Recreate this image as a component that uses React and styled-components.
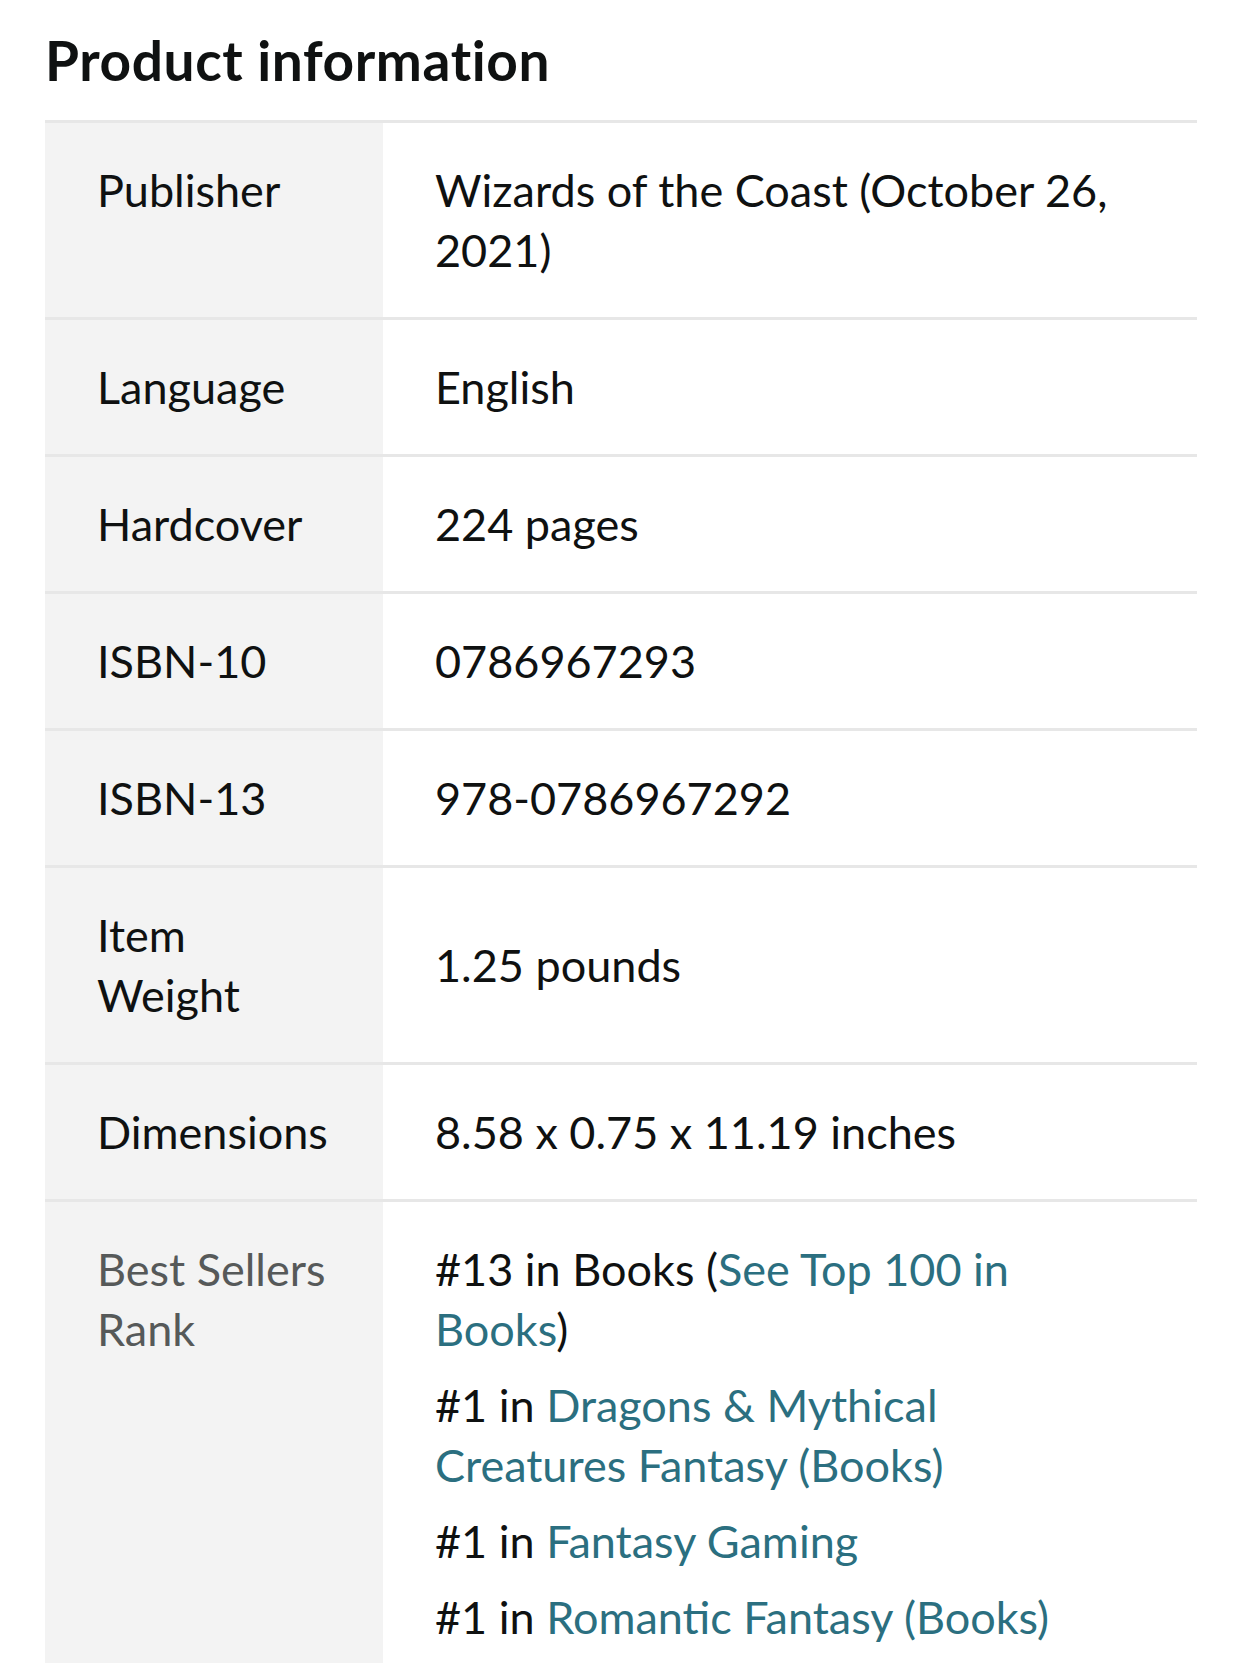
import React from 'react'
import styled, { createGlobalStyle } from 'styled-components'

const GlobalStyle = createGlobalStyle`
  body {
    margin: 0;
    background: #fff;
    color: #0f1111;
    font-family: Lato, "Open Sans", "Liberation Sans", sans-serif;
  }
`;

const Page = styled.div`
  padding: 27px 45px 0;
`;

const Heading = styled.h2`
  margin: 0 0 27px;
  font-size: 55px;
  line-height: 1.2;
  font-weight: 700;
  letter-spacing: 0.6px;
  color: #0f1111;
`;

const Table = styled.table`
  width: 100%;
  border-collapse: separate;
  border-spacing: 0;
  font-size: 45px;
  line-height: 60px;
`;

const Label = styled.th`
  width: 234px;
  padding: 37px 52px;
  background: #f3f3f3;
  border-top: 3px solid #e7e7e7;
  text-align: left;
  vertical-align: top;
  font-weight: 400;
  color: ${props => props.muted ? '#565959' : '#0f1111'};
`;

const Value = styled.td`
  padding: 37px 72px 37px 52px;
  border-top: 3px solid #e7e7e7;
  vertical-align: middle;
  color: #0f1111;
`;

const RankList = styled.ul`
  margin: 0;
  padding: 0;
  list-style: none;
`;

const RankItem = styled.li`
  & + & {
    margin-top: 16px;
  }
`;

const Link = styled.a`
  color: #2b6f80;
  text-decoration: none;
`;

const details = [
  ['Publisher', 'Wizards of the Coast (October 26, 2021)'],
  ['Language', 'English'],
  ['Hardcover', '224 pages'],
  ['ISBN-10', '0786967293'],
  ['ISBN-13', '978-0786967292'],
  ['Item Weight', '1.25 pounds'],
  ['Dimensions', '8.58 x 0.75 x 11.19 inches'],
]

const ranks = [
  { pos: '#1', name: 'Dragons & Mythical Creatures Fantasy (Books)' },
  { pos: '#1', name: 'Fantasy Gaming' },
  { pos: '#1', name: 'Romantic Fantasy (Books)' },
]

export default function App() {
  return (
    <Page>
      <GlobalStyle />
      <Heading>Product information</Heading>
      <Table>
        <tbody>
          {details.map(([label, value]) => (
            <tr key={label}>
              <Label>{label}</Label>
              <Value>{value}</Value>
            </tr>
          ))}
          <tr>
            <Label muted>Best Sellers Rank</Label>
            <Value>
              <RankList>
                <RankItem>
                  #13 in Books (<Link href="#">See Top 100 in Books</Link>)
                </RankItem>
                {ranks.map(r => (
                  <RankItem key={r.name}>
                    {r.pos} in <Link href="#">{r.name}</Link>
                  </RankItem>
                ))}
              </RankList>
            </Value>
          </tr>
        </tbody>
      </Table>
    </Page>
  )
}
